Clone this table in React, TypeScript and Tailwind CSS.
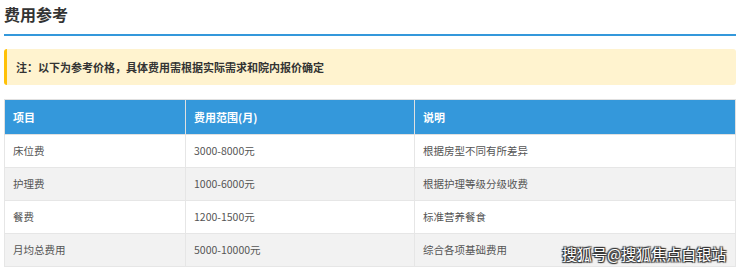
import React from "react";

const rows = [
  { item: "床位费", range: "3000-8000元", note: "根据房型不同有所差异" },
  { item: "护理费", range: "1000-6000元", note: "根据护理等级分级收费" },
  { item: "餐费", range: "1200-1500元", note: "标准营养餐食" },
  { item: "月均总费用", range: "5000-10000元", note: "综合各项基础费用" },
];

export default function App() {
  return (
    <div className="relative w-[740px] h-[272px] overflow-hidden bg-white px-[4px] font-['Microsoft_YaHei','Noto_Sans_CJK_SC',sans-serif] text-[#333]">
      {/* Title */}
      <h2 className="pt-[4px] pb-[9px] text-[16px] leading-[21px] font-bold text-[#333] border-b-2 border-[#3498db]">费用参考</h2>

      {/* Notice */}
      <div className="mt-[13px] h-[36px] flex items-center pl-[9px] bg-[#fff3cf] border-l-[3px] border-[#ffc107] rounded-[3px] text-[11px] font-bold text-[#333]">
        注：以下为参考价格，具体费用需根据实际需求和院内报价确定
      </div>

      {/* Table */}
      <table className="mt-[14px] w-[732px] border-collapse table-fixed">
        <colgroup>
          <col className="w-[181px]" />
          <col className="w-[229px]" />
          <col />
        </colgroup>
        <thead>
          <tr className="h-[35px] bg-[#3498db] text-white text-[11px]">
            <th className="border border-[#e0e0e0] px-[8px] text-left font-bold">项目</th>
            <th className="border border-[#e0e0e0] px-[8px] text-left font-bold">费用范围(月)</th>
            <th className="border border-[#e0e0e0] px-[8px] text-left font-bold">说明</th>
          </tr>
        </thead>
        <tbody>
          {rows.map((r, i) => (
            <tr key={r.item} className={`h-[33px] text-[10.5px] text-[#555] ${i % 2 === 1 ? "bg-[#f2f2f2]" : "bg-white"}`}>
              <td className="border border-[#e6e6e6] px-[8px]">{r.item}</td>
              <td className="border border-[#e6e6e6] px-[8px]">{r.range}</td>
              <td className="border border-[#e6e6e6] px-[8px]">{r.note}</td>
            </tr>
          ))}
        </tbody>
      </table>

      {/* Watermark */}
      <div className="absolute left-[562px] top-[245px] whitespace-nowrap text-[15px] leading-[18px] text-white [text-shadow:0_0_1px_#333,1px_1px_1px_#333,-1px_-1px_1px_#333,1px_-1px_1px_#333,-1px_1px_1px_#333]">
        搜狐号@搜狐焦点白银站
      </div>
    </div>
  );
}
